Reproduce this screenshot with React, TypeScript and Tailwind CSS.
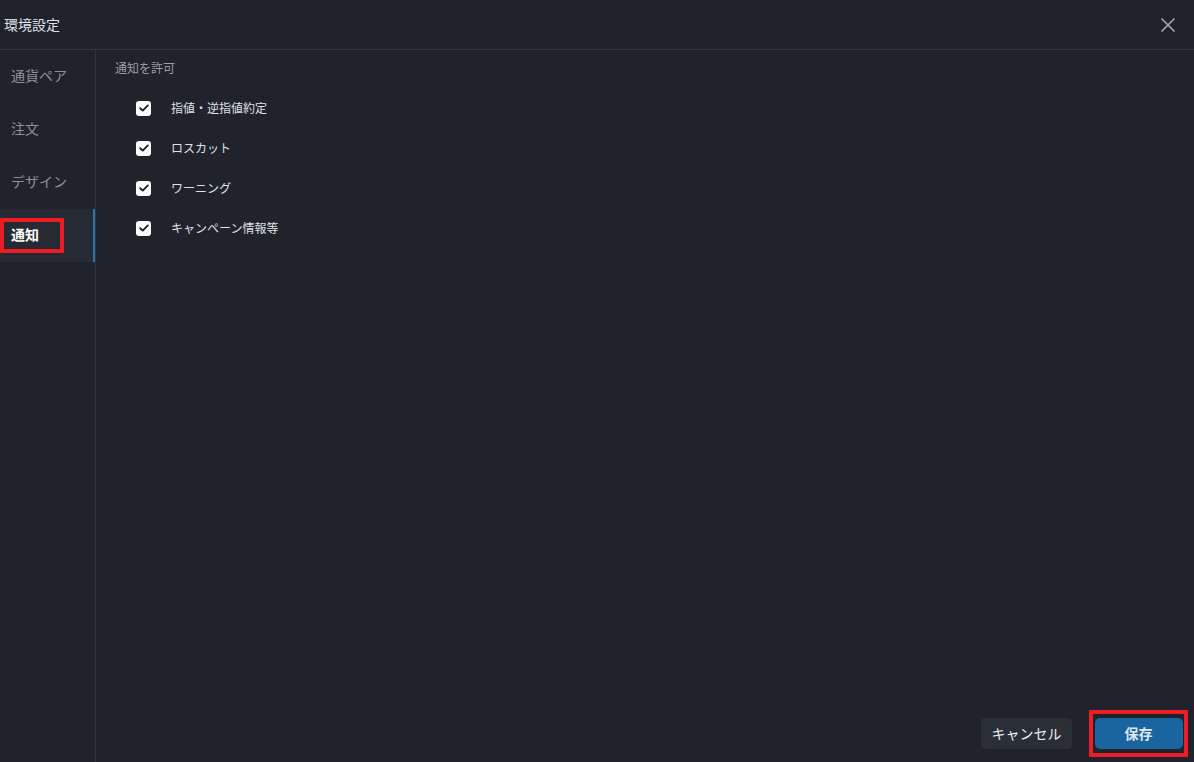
const font = { fontFamily: '"Noto Sans CJK JP", "Liberation Sans", sans-serif' }

const menu = ['通貨ペア', '注文', 'デザイン', '通知']
const options = ['指値・逆指値約定', 'ロスカット', 'ワーニング', 'キャンペーン情報等']

function Check() {
  return (
    <span className="w-[15px] h-[15px] rounded-[3px] bg-white flex items-center justify-center">
      <svg width="10" height="8" viewBox="0 0 10 8" fill="none">
        <path d="M1.2 4.2 L3.8 6.6 L8.8 1.4" stroke="#1f222a" strokeWidth="1.9" strokeLinecap="round" strokeLinejoin="round" />
      </svg>
    </span>
  )
}

export default function App() {
  return (
    <div className="w-[1194px] h-[762px] bg-[#20232b] flex flex-col overflow-hidden" style={font}>
      <div className="h-[50px] shrink-0 flex items-center justify-between border-b border-[#32363e] pl-[4px] pr-[18px]">
        <span className="text-[14px] text-[#dfe1e5]">環境設定</span>
        <svg width="16" height="16" viewBox="0 0 16 16" fill="none">
          <path d="M1.5 1.5 L14.5 14.5 M14.5 1.5 L1.5 14.5" stroke="#a6a9ae" strokeWidth="1.6" />
        </svg>
      </div>
      <div className="flex flex-1 min-h-0">
        <div className="w-[96px] shrink-0 border-r border-[#30343c]">
          {menu.map((m, i) => {
            const active = i === 3
            return (
              <div
                key={m}
                className={`h-[53px] flex items-center pl-[11px] pb-[2px] text-[14px] ${active ? 'bg-[#262a32] text-white font-bold border-r-2 border-[#2577b3] relative' : 'text-[#8d9097]'}`}
              >
                {active && <div className="absolute left-0 top-[9px] w-[64px] h-[35px] border-[4px] border-[#ee1c25]" />}
                <span className="relative">{m}</span>
              </div>
            )
          })}
        </div>
        <div className="flex-1 flex flex-col">
          <div className="flex-1 pl-[19px] pt-[9px]">
            <div className="text-[12px] text-[#9a9da3]">通知を許可</div>
            <div className="flex flex-col mt-[11px] pl-[21px]">
              {options.map(o => (
                <div key={o} className="h-[40px] flex items-center">
                  <Check />
                  <span className="ml-[20px] text-[12px] text-[#dfe1e5]">{o}</span>
                </div>
              ))}
            </div>
          </div>
          <div className="flex justify-end items-center gap-[17px] pr-[6px] pb-[5px]">
            <button className="w-[91px] h-[31px] rounded-[4px] bg-[#2a2e36] text-[14px] text-[#eceef1]">キャンセル</button>
            <div className="w-[99px] h-[47px] border-[4px] border-[#ee1c25] flex items-center justify-center">
              <button className="w-[88px] h-[31px] rounded-[5px] bg-[#1a64a0] text-[14px] text-[#dfe6ee] font-bold">保存</button>
            </div>
          </div>
        </div>
      </div>
    </div>
  )
}
